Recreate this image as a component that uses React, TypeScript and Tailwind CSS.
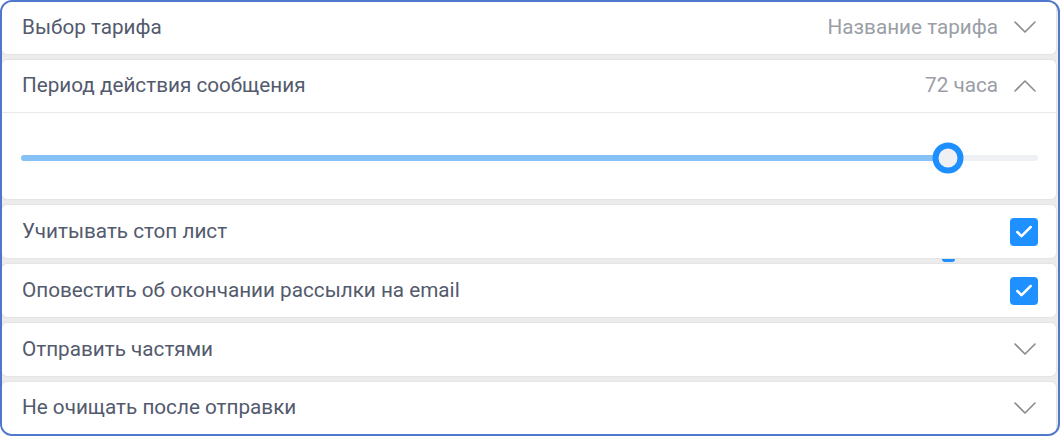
import { Check } from "lucide-react";

function Row({ label, right, h = "h-[53px]" }: { label: string; right?: React.ReactNode; h?: string }) {
  return (
    <div className={`${h} shrink-0 flex items-center justify-between pl-[20px] pr-[18px] bg-white rounded-[5px] shadow-[0_0_2px_rgba(0,0,0,0.12)]`}>
      <span className="text-[20.7px] text-[#535a6d]">{label}</span>
      {right}
    </div>
  );
}

function Chevron({ up }: { up?: boolean }) {
  return (
    <svg width="22" height="13" viewBox="0 0 22 13" fill="none" className="mr-[2px]">
      <polyline
        points={up ? "1,12 11,2 21,12" : "1,1 11,11 21,1"}
        stroke="#8a8b8f"
        strokeWidth="1.6"
        strokeLinecap="round"
        strokeLinejoin="round"
      />
    </svg>
  );
}

function CheckBox() {
  return (
    <div className="w-[28px] h-[28px] rounded-[4px] bg-[#1e90ff] flex items-center justify-center">
      <Check className="w-[20px] h-[20px] text-white" strokeWidth={3} />
    </div>
  );
}

function Value({ text, up }: { text: string; up?: boolean }) {
  return (
    <div className="flex items-center gap-[16px]">
      <span className="text-[20.7px] text-[#9a9ea6]">{text}</span>
      <Chevron up={up} />
    </div>
  );
}

export default function App() {
  const value = 91.15;
  return (
    <div className="w-[1060px] h-[436px] font-['Roboto',sans-serif]">
      <div className="relative w-full h-full border-2 border-[#4f77cc] rounded-[12px] bg-[#ececec] overflow-hidden pr-[2px] flex flex-col gap-[6px]">
        <Row label="Выбор тарифа" h="h-[52px]" right={<Value text="Название тарифа" />} />

        {/* Период */}
        <div className="h-[139px] shrink-0 flex flex-col bg-white rounded-[5px] shadow-[0_0_2px_rgba(0,0,0,0.12)]">
          <div className="h-[53px] flex items-center justify-between pl-[20px] pr-[18px] border-b border-[#e9e9e9]">
            <span className="text-[20.7px] text-[#535a6d]">Период действия сообщения</span>
            <Value text="72 часа" up />
          </div>
          <div className="flex-1 flex items-center pl-[19px] pr-[18px] pt-[4px]">
            <div className="relative w-full h-[6px] rounded-full bg-[#eef0f4]">
              <div className="absolute left-0 top-0 h-full rounded-full bg-[#85c1f7]" style={{ width: `${value}%` }} />
              <div
                className="absolute top-1/2 w-[31px] h-[31px] -translate-x-1/2 -translate-y-1/2 rounded-full border-[6px] border-[#1e8fff] bg-[#eef0f4]"
                style={{ left: `${value}%` }}
              />
            </div>
          </div>
        </div>

        <Row label="Учитывать стоп лист" right={<CheckBox />} />
        <Row label="Оповестить об окончании рассылки на email" right={<CheckBox />} />
        <Row label="Отправить частями" right={<Chevron />} />
        <Row label="Не очищать после отправки" h="h-[52px]" right={<Chevron />} />

        {/* thumb peeking between rows */}
        <div className="absolute left-[940px] top-[257px] w-[13px] h-[3px] rounded-b-full bg-[#1e8fff]" />
      </div>
    </div>
  );
}
